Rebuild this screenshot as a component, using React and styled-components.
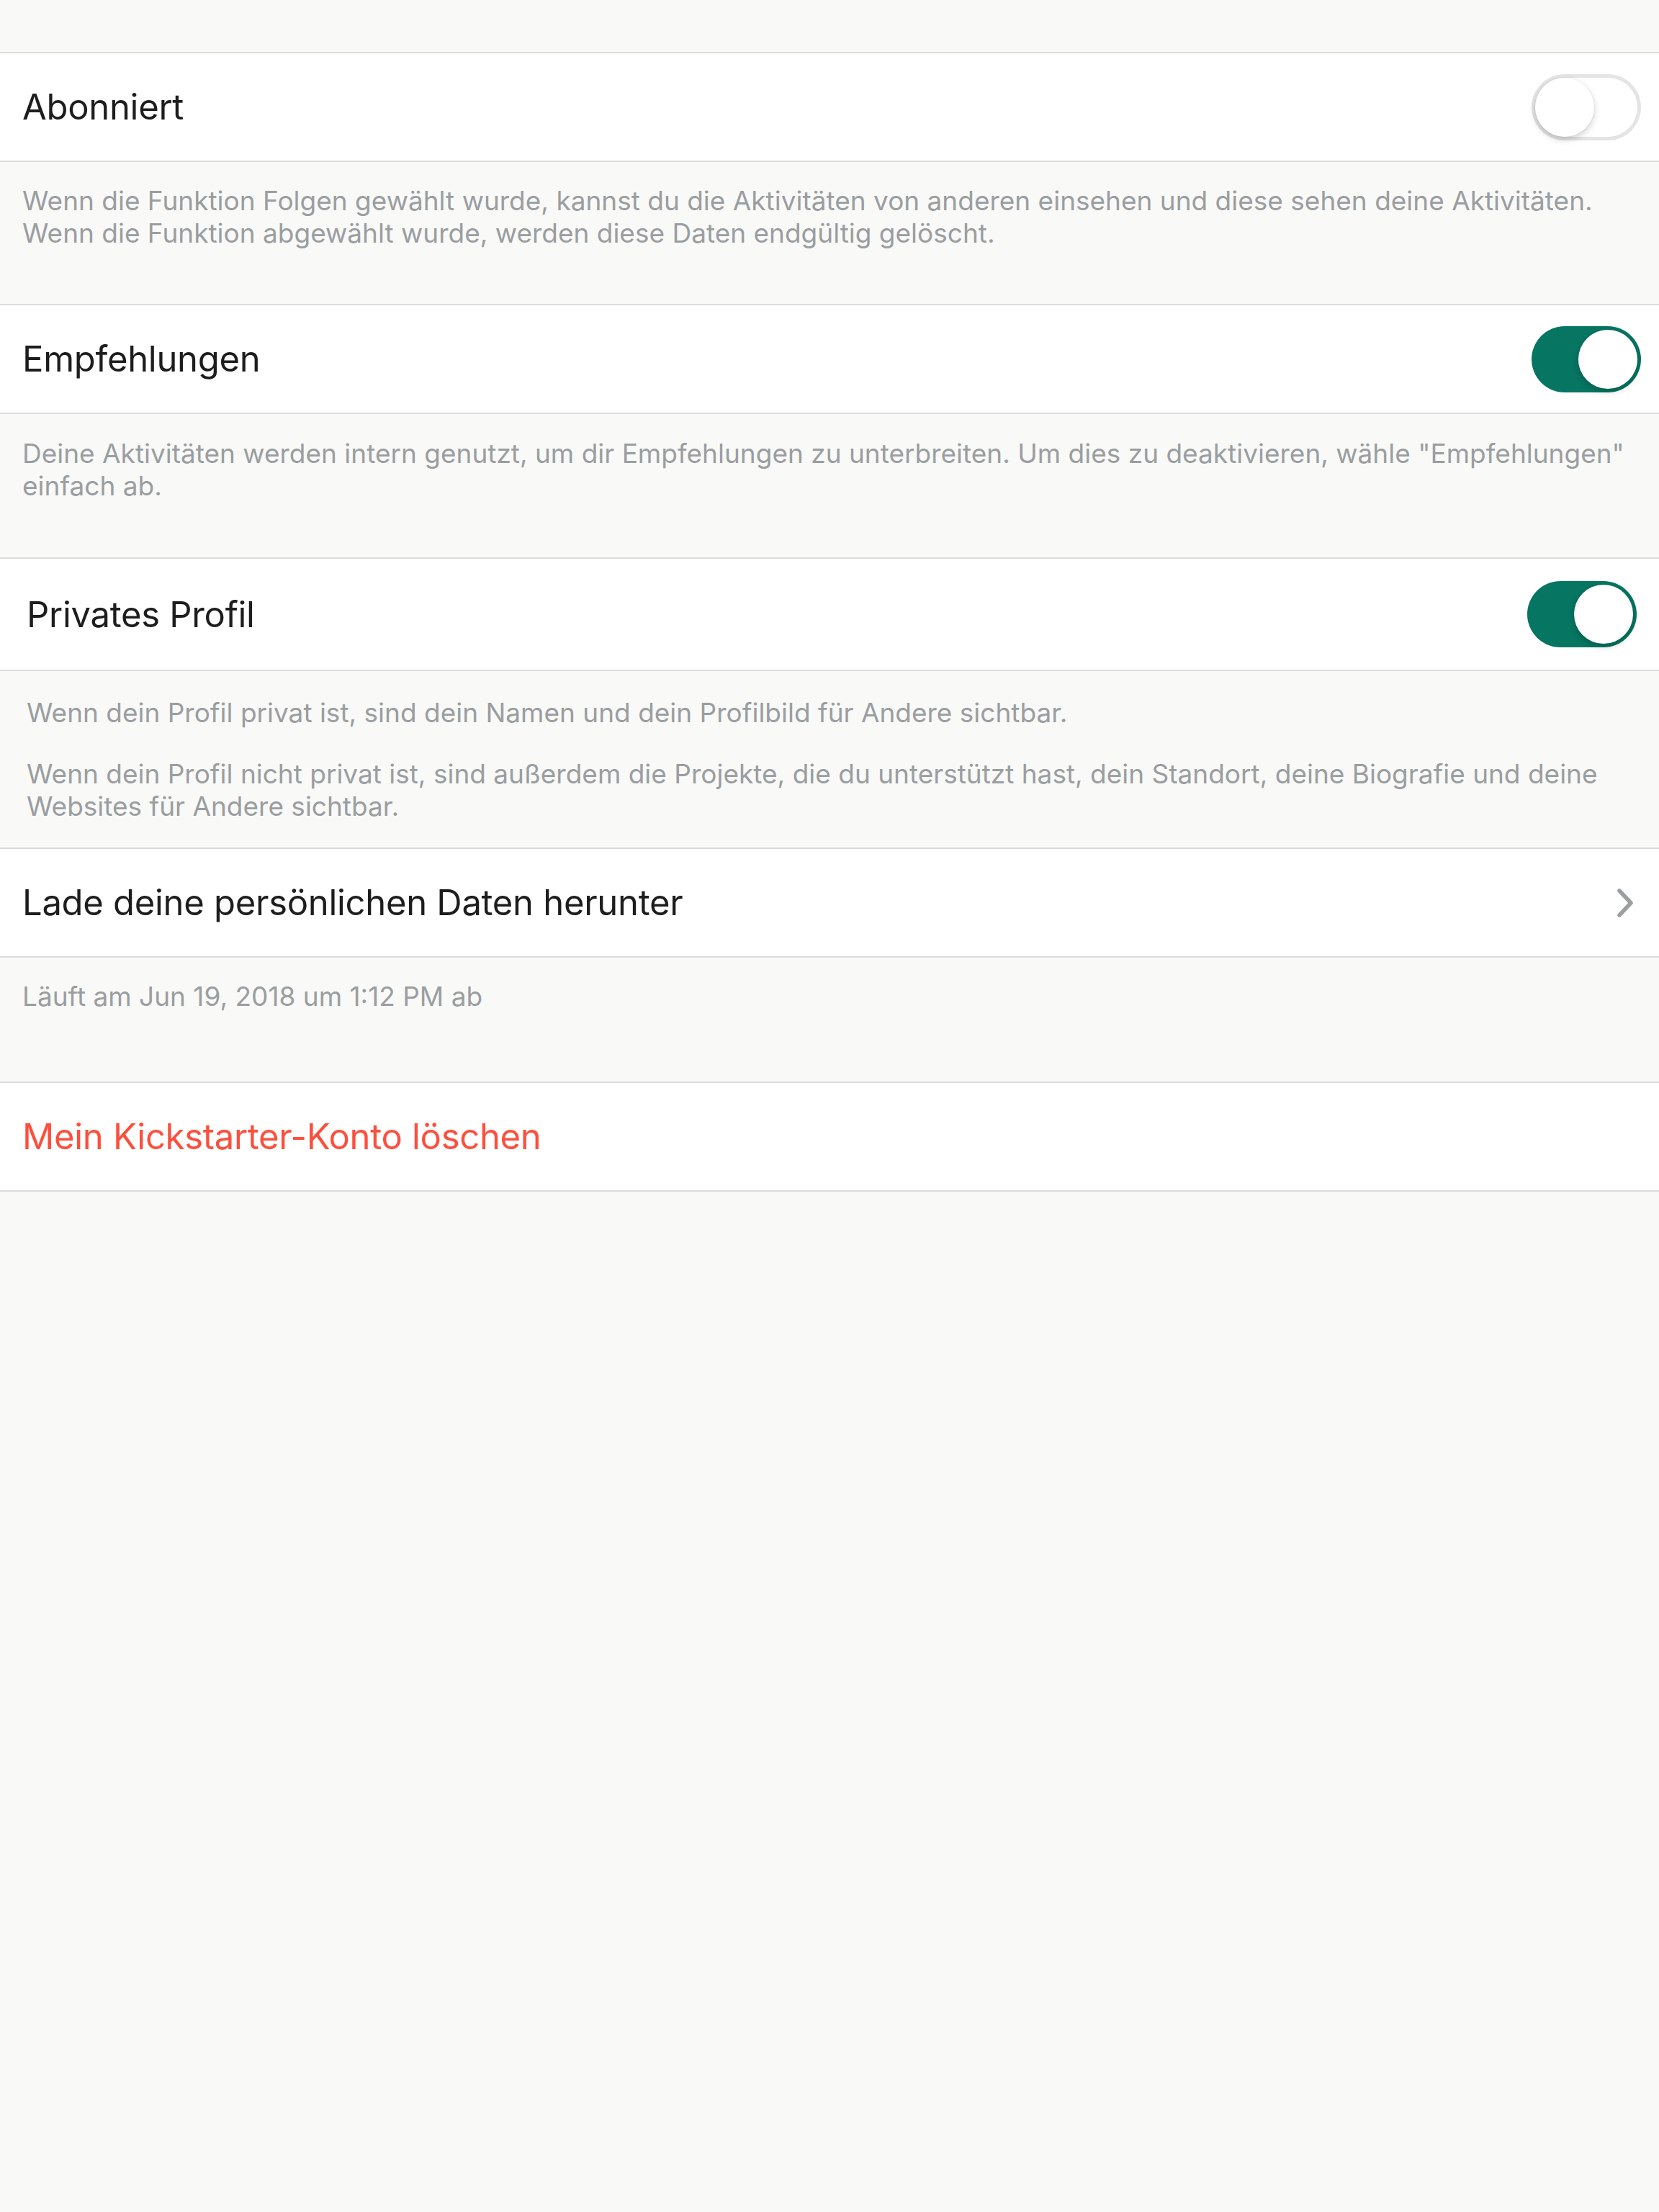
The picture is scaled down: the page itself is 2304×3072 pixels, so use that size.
import styled, { createGlobalStyle } from 'styled-components';

const GlobalStyle = createGlobalStyle`
  html, body {
    margin: 0;
    padding: 0;
    background: #f9f9f8;
  }
  body {
    font-family: Inter, 'Noto Sans', 'Liberation Sans', sans-serif;
    -webkit-font-smoothing: antialiased;
  }
`

function Toggle({on}){
  return (
    <Track $on={on}>
      <Knob />
    </Track>
  )
}

function Chevron(){
  return (
    <svg width="26" height="44" viewBox="0 0 26 44">
      <path d="M4 5 L20 22 L4 39" fill="none" stroke="#9b9fa1" strokeWidth="5.5" strokeLinecap="round" strokeLinejoin="round" />
    </svg>
  )
}

export default function App(){
  return (
    <Page>
      <GlobalStyle />
      <TopSpace />

      <Row>
        <Title>Abonniert</Title>
        <Toggle on={false} />
      </Row>
      <Footer $pad="31px 31px 76px">
        <Note>
          Wenn die Funktion Folgen gewählt wurde, kannst du die Aktivitäten von anderen einsehen und diese sehen deine Aktivitäten. Wenn die Funktion abgewählt wurde, werden diese Daten endgültig gelöscht.
        </Note>
      </Footer>

      <Row>
        <Title>Empfehlungen</Title>
        <Toggle on={true} />
      </Row>
      <Footer $pad="32px 20px 77px 31px">
        <Note>
          Deine Aktivitäten werden intern genutzt, um dir Empfehlungen zu unterbreiten. Um dies zu deaktivieren, wähle "Empfehlungen" einfach ab.
        </Note>
      </Footer>

      <Row $tall $inset="37px" $right="31px">
        <Title>Privates Profil</Title>
        <Toggle on={true} />
      </Row>
      <Footer $pad="35px 37px 35px">
        <Note>Wenn dein Profil privat ist, sind dein Namen und dein Profilbild für Andere sichtbar.</Note>
        <Note $gap>
          Wenn dein Profil nicht privat ist, sind außerdem die Projekte, die du unterstützt hast, dein Standort, deine Biografie und deine Websites für Andere sichtbar.
        </Note>
      </Footer>

      <Row $right="33px">
        <Title>Lade deine persönlichen Daten herunter</Title>
        <Chevron />
      </Row>
      <Footer $pad="31px 31px 96px">
        <Note>Läuft am Jun 19, 2018 um 1:12 PM ab</Note>
      </Footer>

      <Row>
        <Title $danger>Mein Kickstarter-Konto löschen</Title>
      </Row>
    </Page>
  )
}

const Page = styled.div`
  min-height: 3072px;
  background: #f9f9f8;
  display: flex;
  flex-direction: column;
`

const TopSpace = styled.div`
  height: 72px;
`

const Row = styled.div`
  box-sizing: content-box;
  height: ${p => p.$tall ? '154px' : '149px'};
  background: #ffffff;
  border-top: 2px solid #dcdcdc;
  border-bottom: 2px solid #dcdcdc;
  display: flex;
  align-items: center;
  justify-content: space-between;
  padding: 0 ${p => p.$right || '25px'} 0 ${p => p.$inset || '31px'};
`

const Title = styled.div`
  font-size: 49px;
  font-weight: 400;
  color: ${p => p.$danger ? '#fd4f3d' : '#1d1d1d'};
  letter-spacing: -0.3px;
`

const Footer = styled.div`
  padding: ${p => p.$pad};
  display: flex;
  flex-direction: column;
`

const Note = styled.p`
  margin: ${p => p.$gap ? '40px' : '0'} 0 0;
  font-size: 37px;
  line-height: 45px;
  color: #9a9ea0;
`

const Track = styled.div`
  box-sizing: border-box;
  width: 152px;
  height: 92px;
  border-radius: 46px;
  padding: 5px;
  display: flex;
  align-items: center;
  justify-content: ${p => p.$on ? 'flex-end' : 'flex-start'};
  background: ${p => p.$on ? '#067561' : '#ffffff'};
  box-shadow: ${p => p.$on ? 'none' : 'inset 0 0 0 5px #e4e4e4'};
`

const Knob = styled.div`
  width: 82px;
  height: 82px;
  border-radius: 50%;
  background: #ffffff;
  box-shadow: 0 4px 10px rgba(0, 0, 0, 0.18), 0 0 0 1px rgba(0, 0, 0, 0.04);
`
